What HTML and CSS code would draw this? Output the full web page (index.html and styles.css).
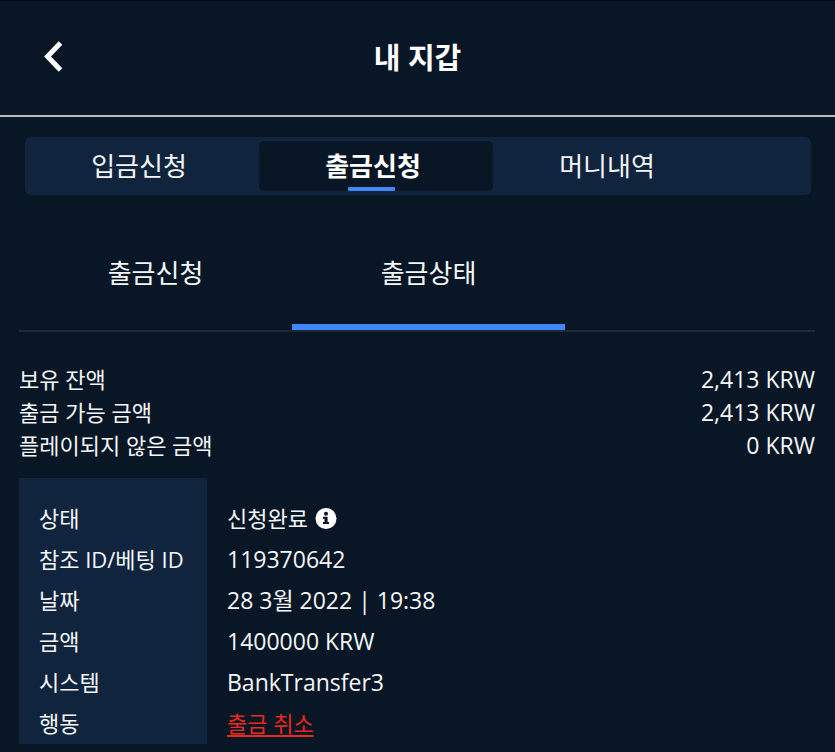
FILE: index.html
```html
<!DOCTYPE html>
<html lang="ko">
<head>
	<meta charset="UTF-8">
	<meta name="viewport" content="width=device-width, initial-scale=1">
	<title>내 지갑</title>
	<link rel="stylesheet" href="styles.css">
</head>
<body>
	<header class="header">
		<button type="button" class="back" aria-label="뒤로">
			<svg width="20" height="32" viewBox="0 0 20 32" fill="none" stroke="#fff" stroke-width="5">
				<path d="M17.5 2L4.5 15.5l13 13.5"/>
			</svg>
		</button>
		<h1 class="title">내 지갑</h1>
	</header>

	<nav class="tabs">
		<button type="button" class="tab">입금신청</button>
		<button type="button" class="tab active">출금신청</button>
		<button type="button" class="tab">머니내역</button>
	</nav>

	<main class="content">
		<nav class="subtabs">
			<button type="button" class="subtab">출금신청</button>
			<button type="button" class="subtab active">출금상태</button>
		</nav>

		<dl class="balance">
			<div class="balance-row">
				<dt>보유 잔액</dt>
				<dd>2,413 KRW</dd>
			</div>
			<div class="balance-row">
				<dt>출금 가능 금액</dt>
				<dd>2,413 KRW</dd>
			</div>
			<div class="balance-row">
				<dt>플레이되지 않은 금액</dt>
				<dd>0 KRW</dd>
			</div>
		</dl>

		<table class="detail">
			<tr>
				<th scope="row">상태</th>
				<td class="ko">
					<span class="status">신청완료
						<svg width="22" height="22" viewBox="0 0 22 22">
							<circle cx="11" cy="10.5" r="10.5" fill="#fff"/>
							<circle cx="11" cy="5.7" r="2" fill="#091626"/>
							<path d="M8 8.8h4.6V14H14v2H8v-2h1.5v-3.2H8z" fill="#091626"/>
						</svg>
					</span>
				</td>
			</tr>
			<tr>
				<th scope="row">참조 ID/베팅 ID</th>
				<td>119370642</td>
			</tr>
			<tr>
				<th scope="row">날짜</th>
				<td>28 3월 2022 | 19:38</td>
			</tr>
			<tr>
				<th scope="row">금액</th>
				<td>1400000 KRW</td>
			</tr>
			<tr>
				<th scope="row">시스템</th>
				<td>BankTransfer3</td>
			</tr>
			<tr>
				<th scope="row">행동</th>
				<td class="ko"><a href="#" class="cancel">출금 취소</a></td>
			</tr>
		</table>
	</main>
</body>
</html>
```
FILE: styles.css
```css
*{
	margin: 0;
	padding: 0;
	box-sizing: border-box;
}
body{
	background: #091626;
	border-top: 1px solid #02070f;
	color: #f4f6f8;
	font-family: "Open Sans", "Noto Sans CJK KR", sans-serif;
	font-size: 22px;
}
button{
	border: 0;
	background: none;
	color: inherit;
	font: inherit;
	cursor: pointer;
}
/* header */
.header{
	display: grid;
	grid-template-columns: 66px 1fr 66px;
	align-items: center;
	height: 116px;
	padding: 0 20px;
	border-bottom: 2px solid #b9b9bb;
}
.back{
	display: flex;
	justify-content: center;
	padding: 10px 0 12px;
}
.title{
	font-size: 29px;
	font-weight: 700;
	line-height: 40px;
	text-align: center;
	color: #fff;
}
/* main tabs */
.tabs{
	display: flex;
	height: 58px;
	margin: 20px 24px 0 25px;
	padding: 4px 0;
	border-radius: 6px;
	background: #10243d;
}
.tab{
	position: relative;
	width: 234px;
	padding-right: 6px;
	border-radius: 5px;
	font-size: 26px;
	line-height: 50px;
}
.tab.active{
	background: #091626;
	color: #fff;
	font-weight: 700;
}
.tab.active::after{
	content: "";
	position: absolute;
	left: 38%;
	bottom: 0;
	width: 20%;
	height: 4px;
	border-radius: 1px;
	background: #3f87fb;
}
/* content */
.content{
	padding: 0 20px 8px 19px;
}
.subtabs{
	display: flex;
	margin-top: 20px;
	border-bottom: 2px solid #1e2938;
}
.subtab{
	width: 273px;
	height: 115px;
	padding-top: 6px;
	border-bottom: 6px solid transparent;
	font-size: 26px;
	line-height: 40px;
}
.subtab.active{
	border-bottom-color: #3f87fb;
}
.balance{
	margin-top: 31px;
	line-height: 33px;
}
.balance-row{
	display: flex;
	justify-content: space-between;
}
.balance dd{
	font-size: 23px;
}
.detail{
	margin-top: 16px;
	border-collapse: collapse;
	line-height: 41px;
}
.detail th{
	width: 188px;
	padding-left: 20px;
	background: #10243d;
	font-weight: 400;
	text-align: left;
}
.detail td{
	padding: 0 20px;
	font-size: 23px;
}
.detail td.ko{
	font-size: 22px;
}
.detail tr:first-child th,
.detail tr:first-child td{
	padding-top: 20px;
}
.status{
	display: flex;
	align-items: center;
	gap: 7px;
}
.cancel{
	color: #e8291c;
	text-underline-offset: 3px;
}
```
